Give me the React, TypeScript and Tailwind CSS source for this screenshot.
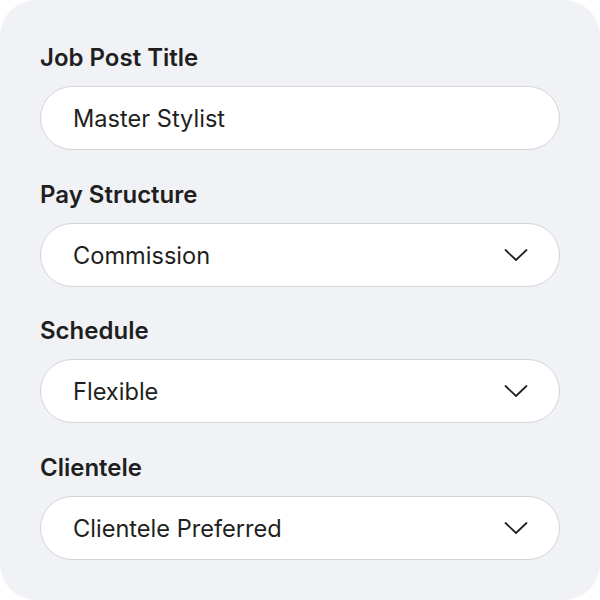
type Field = { label: string; value: string; select?: boolean };

const fields: Field[] = [
  { label: "Job Post Title", value: "Master Stylist" },
  { label: "Pay Structure", value: "Commission", select: true },
  { label: "Schedule", value: "Flexible", select: true },
  { label: "Clientele", value: "Clientele Preferred", select: true },
];

function Chevron() {
  return (
    <svg width="24" height="14" viewBox="0 0 24 14" fill="none" className="text-[#222]">
      <path d="M1.5 2 L12 12 L22.5 2" stroke="currentColor" strokeWidth="1.8" strokeLinecap="round" strokeLinejoin="round" />
    </svg>
  );
}

function FormField({ label, value, select }: Field) {
  return (
    <div className="flex flex-col gap-3.5">
      <div className="text-[24px] font-semibold leading-7 text-[#1f1f22]">{label}</div>
      <div className="flex h-16 items-center justify-between rounded-full border-[1.5px] border-[#d4d5da] bg-white pl-8 pr-[31px]">
        <span className="pt-0.5 text-[23.6px] text-[#1f1f22]">{value}</span>
        {select && <Chevron />}
      </div>
    </div>
  );
}

export default function App() {
  return (
    <div className="h-[600px] w-[600px] bg-white font-['Inter',sans-serif]">
      <div className="flex h-full w-full flex-col gap-[30.5px] rounded-[36px] bg-[#f1f2f6] px-10 pb-10 pt-[44px]">
        {fields.map((f) => (
          <FormField key={f.label} {...f} />
        ))}
      </div>
    </div>
  );
}
